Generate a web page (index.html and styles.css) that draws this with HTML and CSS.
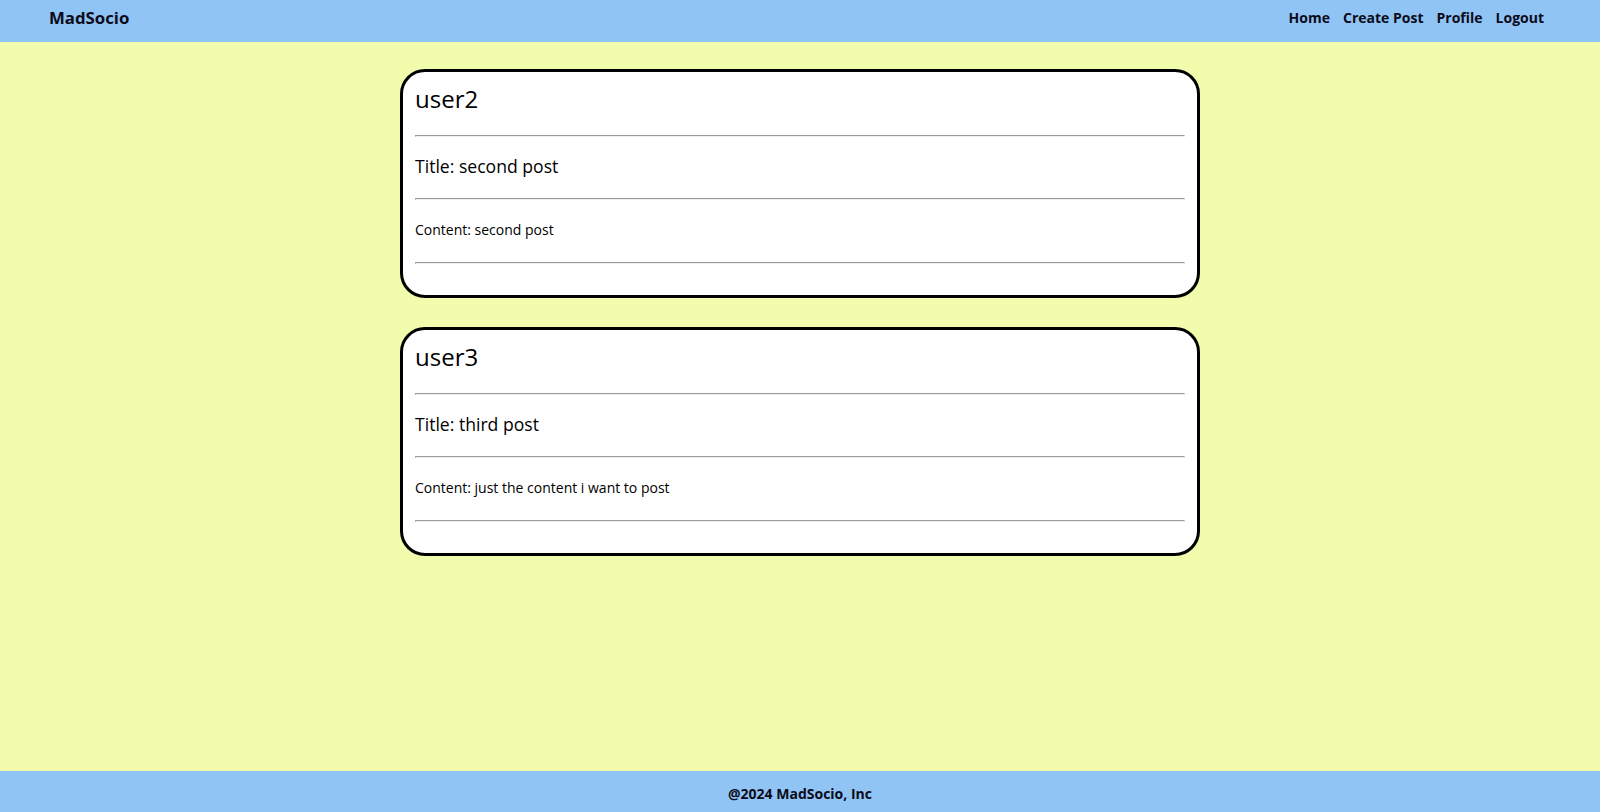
FILE: index.html
```html
<!DOCTYPE html>
<html lang="en">
<head>
<meta charset="utf-8">
<title>MadSocio</title>
<link rel="stylesheet" href="styles.css">
</head>
<body>
<header class="topbar">
  <div class="brand">MadSocio</div>
  <nav class="nav">
    <a href="#" class="nav-link">Home</a>
    <a href="#" class="nav-link">Create Post</a>
    <a href="#" class="nav-link">Profile</a>
    <a href="#" class="nav-link">Logout</a>
  </nav>
</header>
<main class="feed">
  <article class="post">
    <h2 class="post-user">user2</h2>
    <hr class="rule">
    <h3 class="post-title">Title: second post</h3>
    <hr class="rule">
    <p class="post-content">Content: second post</p>
    <hr class="rule">
  </article>
  <article class="post">
    <h2 class="post-user">user3</h2>
    <hr class="rule">
    <h3 class="post-title">Title: third post</h3>
    <hr class="rule">
    <p class="post-content">Content: just the content i want to post</p>
    <hr class="rule">
  </article>
</main>
<footer class="footer">@2024 MadSocio, Inc</footer>
</body>
</html>
```
FILE: styles.css
```css
* { box-sizing: border-box; }
html, body { margin: 0; padding: 0; }
body {
  font-family: "Open Sans", "Noto Sans", "Liberation Sans", sans-serif;
  color: #000;
  background: #f1fdac;
  min-height: 100vh;
  display: flex;
  flex-direction: column;
}
.topbar {
  height: 42px;
  background: #90c4f5;
  display: flex;
  justify-content: space-between;
  align-items: flex-start;
  padding: 6px 56px 0 49px;
  font-weight: 700;
}
.brand { color: #0b0b1a; font-size: 16.8px; }
.nav { display: flex; gap: 13px; font-size: 14px; padding-top: 2px; }
.nav-link { color: #0b0b1a; text-decoration: none; }
.feed {
  flex: 1;
  display: flex;
  flex-direction: column;
  align-items: center;
  gap: 29px;
  padding-top: 27px;
}
.post {
  width: 800px;
  background: #fff;
  border: 3px solid #000;
  border-radius: 25px;
  padding: 10px 12px 31px;
}
.post-user {
  font-size: 24px;
  font-weight: 400;
  margin: 0 0 20px;
}
.post-title {
  font-size: 17.6px;
  font-weight: 400;
  margin: 17px 0 20px;
}
.post-content {
  font-size: 14px;
  margin: 20px 0 23px;
}
.rule {
  margin: 0;
  border: 1px inset;
  color: gray;
}
.footer {
  height: 41px;
  background: #90c4f5;
  display: flex;
  align-items: center;
  justify-content: center;
  padding-top: 3px;
  font-weight: 700;
  font-size: 14px;
  color: #0b0b1a;
}
```
